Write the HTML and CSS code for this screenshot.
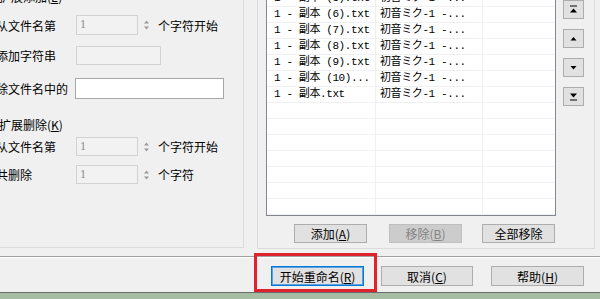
FILE: index.html
```html
<!DOCTYPE html>
<html lang="zh-CN">
<head>
  <meta charset="UTF-8">
  <title>批量重命名</title>
  <link rel="stylesheet" href="styles.css">
</head>
<body>
  <div class="dialog">
    <div class="main">

      <!-- 左边：扩展名设置 -->
      <div class="group left-group">
        <div class="legend legend-top">扩展添加(<u>E</u>)</div>
        <div class="row row1">
          <span class="label">从文件名第</span>
          <span class="field num">1</span>
          <svg class="spin" width="11" height="20" viewBox="0 0 11 20"><path d="M3 8.5h5L5.5 5.5z M3 11.5h5L5.5 14.5z" fill="#9a9a9a"/></svg>
          <span class="after">个字符开始</span>
        </div>
        <div class="row row2">
          <span class="label">添加字符串</span>
          <span class="field wide"></span>
        </div>
        <div class="row row3">
          <span class="label">除文件名中的</span>
          <span class="field text"></span>
        </div>
        <div class="legend legend-mid">扩展删除(<u>K</u>)</div>
        <div class="row row4">
          <span class="label">从文件名第</span>
          <span class="field num">1</span>
          <svg class="spin" width="11" height="20" viewBox="0 0 11 20"><path d="M3 8.5h5L5.5 5.5z M3 11.5h5L5.5 14.5z" fill="#9a9a9a"/></svg>
          <span class="after">个字符开始</span>
        </div>
        <div class="row row5">
          <span class="label">共删除</span>
          <span class="field num">1</span>
          <svg class="spin" width="11" height="20" viewBox="0 0 11 20"><path d="M3 8.5h5L5.5 5.5z M3 11.5h5L5.5 14.5z" fill="#9a9a9a"/></svg>
          <span class="after">个字符</span>
        </div>
      </div>

      <!-- 右边：文件列表 -->
      <div class="group right-group">
        <div class="list-area">
          <div class="list">
            <div class="list-row"><span class="c1">1 - 副本 (4).txt</span><span class="c2">初音ミク-1 -...</span><span class="c3"></span></div>
            <div class="list-row"><span class="c1">1 - 副本 (5).txt</span><span class="c2">初音ミク-1 -...</span><span class="c3"></span></div>
            <div class="list-row"><span class="c1">1 - 副本 (6).txt</span><span class="c2">初音ミク-1 -...</span><span class="c3"></span></div>
            <div class="list-row"><span class="c1">1 - 副本 (7).txt</span><span class="c2">初音ミク-1 -...</span><span class="c3"></span></div>
            <div class="list-row"><span class="c1">1 - 副本 (8).txt</span><span class="c2">初音ミク-1 -...</span><span class="c3"></span></div>
            <div class="list-row"><span class="c1">1 - 副本 (9).txt</span><span class="c2">初音ミク-1 -...</span><span class="c3"></span></div>
            <div class="list-row"><span class="c1">1 - 副本 (10)...</span><span class="c2">初音ミク-1 -...</span><span class="c3"></span></div>
            <div class="list-row"><span class="c1">1 - 副本.txt</span><span class="c2">初音ミク-1 -...</span><span class="c3"></span></div>
            <div class="list-row"><span class="c1"></span><span class="c2"></span><span class="c3"></span></div>
            <div class="list-row"><span class="c1"></span><span class="c2"></span><span class="c3"></span></div>
            <div class="list-row"><span class="c1"></span><span class="c2"></span><span class="c3"></span></div>
            <div class="list-row"><span class="c1"></span><span class="c2"></span><span class="c3"></span></div>
            <div class="list-row"><span class="c1"></span><span class="c2"></span><span class="c3"></span></div>
            <div class="list-row"><span class="c1"></span><span class="c2"></span><span class="c3"></span></div>
            <div class="list-row"><span class="c1"></span><span class="c2"></span><span class="c3"></span></div>
          </div>
          <div class="arrows">
            <div class="arrow-btn"><svg width="9" height="9" viewBox="0 0 9 9"><path d="M1 1h7" stroke="#000"/><path d="M1 7.5h7L4.5 3.5z" fill="#000"/></svg></div>
            <div class="arrow-btn"><svg width="9" height="9" viewBox="0 0 9 9"><path d="M1.5 6.5h6L4.5 3z" fill="#000"/></svg></div>
            <div class="arrow-btn"><svg width="9" height="9" viewBox="0 0 9 9"><path d="M1.5 3h6L4.5 6.5z" fill="#000"/></svg></div>
            <div class="arrow-btn"><svg width="9" height="9" viewBox="0 0 9 9"><path d="M1 1.5h7L4.5 5.5z" fill="#000"/><path d="M1 8h7" stroke="#000"/></svg></div>
          </div>
        </div>
        <div class="list-buttons">
          <button class="btn">添加(<u>A</u>)</button>
          <button class="btn disabled">移除(<u>B</u>)</button>
          <button class="btn">全部移除</button>
        </div>
      </div>
    </div>

    <div class="sep"></div>

    <div class="footer">
      <button class="btn big default">开始重命名(<u>R</u>)</button>
      <button class="btn big cancel">取消(<u>C</u>)</button>
      <button class="btn big help">帮助(<u>H</u>)</button>
    </div>

    <div class="edge"></div>

    <!-- 红框标注 -->
    <div class="highlight"></div>
  </div>
</body>
</html>
```

FILE: styles.css
```css
body {
  margin: 0;
  background: #f0f0f0;
  font-family: "Noto Sans CJK SC", "Liberation Sans", sans-serif;
  font-size: 12px;
  color: #000;
  overflow: hidden;
}

.dialog {
  position: relative;
  width: 600px;
  height: 299px;
  overflow: hidden;
  display: flex;
  flex-direction: column;
}

.main {
  display: flex;
  align-items: flex-start;
  height: 249px;
  flex: none;
}

.group { box-sizing: border-box; }

/* left group */
.left-group {
  width: 254px;
  height: 248px;
  margin-left: -10px;
  padding-left: 6px;
  border-right: 1px solid #dcdcdc;
  border-bottom: 1px solid #dcdcdc;
  display: flex;
  flex-direction: column;
}

.legend {
  height: 20px;
  line-height: 20px;
  margin-left: 3px;
  white-space: nowrap;
}
.legend-top { margin-top: -13px; }
.legend-mid { margin-top: 16px; }

.row {
  display: flex;
  align-items: center;
  white-space: nowrap;
}
.row1 { margin-top: 8px; height: 20px; }
.row2 { margin-top: 11px; height: 19px; }
.row3 { margin-top: 13px; height: 21px; }
.row4 { margin-top: 2px; height: 19px; }
.row5 { margin-top: 9px; height: 19px; }

.label { width: 80px; flex: none; }

.field {
  box-sizing: border-box;
  height: 100%;
  border: 1px solid #d2d2d2;
  background: #f2f2f2;
  flex: none;
}
.field.num {
  width: 62px;
  padding-left: 3px;
  color: #8c8c8c;
  font-family: "Liberation Serif", serif;
  font-size: 12px;
  line-height: 17px;
}
.field.wide { width: 85px; }
.field.text {
  width: 149px;
  margin-left: -1px;
  background: #fff;
  border-color: #a7a7a7;
}

.spin { margin-left: 3px; flex: none; }
.after { margin-left: 6px; }

/* right group */
.right-group {
  width: 338px;
  height: 249px;
  margin-left: 13px;
  padding: 0 10px 0 8px;
  border-left: 1px solid #dcdcdc;
  border-right: 1px solid #dcdcdc;
  border-bottom: 1px solid #dcdcdc;
  display: flex;
  flex-direction: column;
}

.list-area {
  display: flex;
  align-items: flex-start;
  gap: 7px;
}

.list {
  box-sizing: border-box;
  width: 290px;
  height: 242px;
  margin-top: -26px;
  border: 1px solid #828790;
  background: #fff;
  overflow: hidden;
  font-family: "Liberation Mono", "Noto Sans CJK SC", monospace;
  font-size: 11px;
  letter-spacing: -0.4px;
}

.list-row {
  display: flex;
  height: 16px;
  box-sizing: border-box;
  border-bottom: 1px solid #f0f0f0;
  line-height: 15px;
  white-space: nowrap;
}
.list-row span { box-sizing: border-box; overflow: hidden; }
.c1 { width: 109px; padding-left: 7px; border-right: 1px solid #f0f0f0; }
.c2 { width: 107px; padding-left: 4px; border-right: 1px solid #f0f0f0; }
.c3 { flex: 1; }

.arrows {
  display: flex;
  flex-direction: column;
  gap: 10px;
}
.arrow-btn {
  box-sizing: border-box;
  width: 21px;
  height: 19px;
  background: #e1e1e1;
  border: 1px solid #adadad;
  display: flex;
  align-items: center;
  justify-content: center;
}

.list-buttons {
  display: flex;
  margin-top: 8px;
  margin-left: 28px;
}

.btn {
  box-sizing: border-box;
  width: 73px;
  height: 19px;
  padding: 0;
  background: #e1e1e1;
  border: 1px solid #adadad;
  font-family: "Noto Sans CJK SC", sans-serif;
  font-size: 12px;
  line-height: 16px;
  color: #000;
}
.list-buttons .btn + .btn { margin-left: 22px; }
.list-buttons .btn:last-child { margin-left: 20px; }
.btn.disabled {
  background: #cccccc;
  border-color: #bfbfbf;
  color: #838383;
}

/* bottom */
.sep {
  flex: none;
  margin-top: 7px;
  height: 1px;
  background: #a0a0a0;
  border-bottom: 1px solid #fff;
}

.footer {
  flex: none;
  height: 34px;
  box-sizing: border-box;
  padding: 8px 0 0 271px;
  display: flex;
  align-items: flex-start;
}
.btn.big { height: 20px; width: 93px; line-height: 17px; }
.btn.default {
  border-color: #0078d7;
  box-shadow: inset 0 0 0 1px #5aa3e3;
}
.btn.cancel { width: 92px; margin-left: 17px; }
.btn.help { margin-left: 18px; }

.edge {
  flex: 1;
  border-top: 1px solid #6a6a6a;
  background: #a7bda3;
}

.highlight {
  position: absolute;
  left: 254px;
  top: 253px;
  width: 123px;
  height: 39px;
  box-sizing: border-box;
  border: 3px solid #e0222c;
}
```
